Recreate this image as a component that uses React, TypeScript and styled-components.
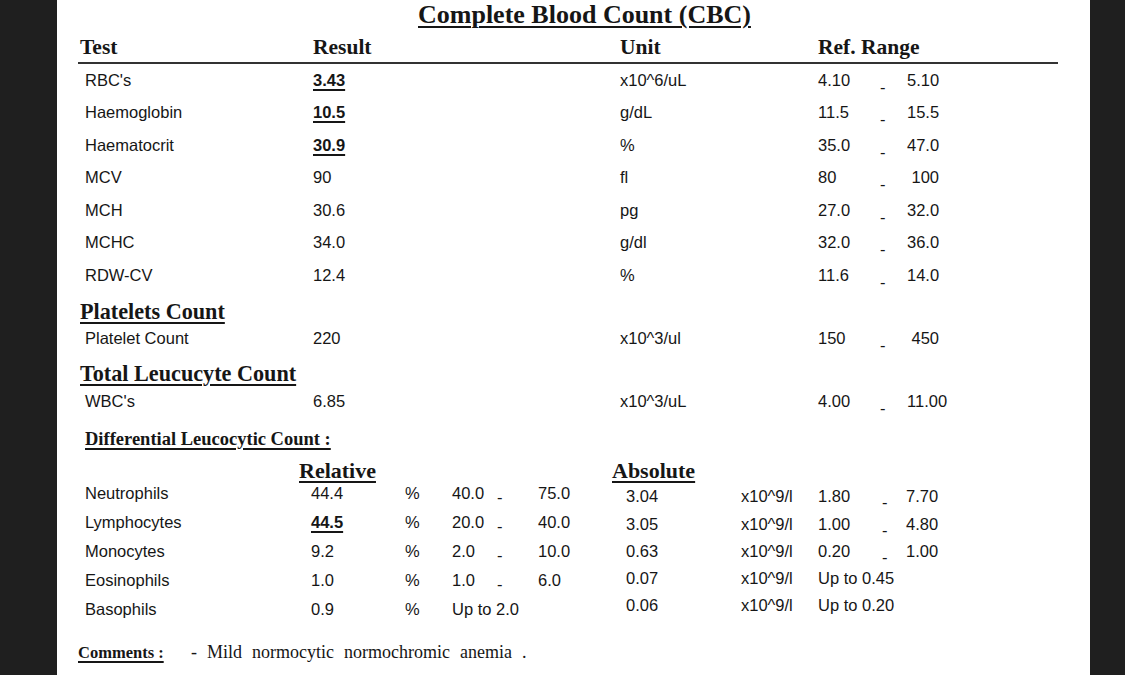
import React from 'react';
import styled, { createGlobalStyle } from 'styled-components';

const Global = createGlobalStyle`
  html, body { margin: 0; padding: 0; background: #1f1f1f; }
  body { width: 1125px; height: 675px; overflow: hidden; }
`;

const SERIF = `"Liberation Serif", "Times New Roman", serif`;
const SANS = `"Liberation Sans", Arial, sans-serif`;

const Viewport = styled.div`
  display: flex;
  width: 1125px;
  height: 675px;
  background: #1f1f1f;
`;

const Band = styled.div<{ $w: number }>`
  flex: 0 0 ${(p) => p.$w}px;
  background: #1f1f1f;
`;

const Paper = styled.main`
  flex: 1;
  background: #ffffff;
  padding: 0 32px 0 21px;
  overflow: hidden;
  color: #161616;
  font-family: ${SANS};
  font-size: 16.5px;
`;

const Title = styled.h1`
  margin: 0;
  padding-left: 340px;
  font: bold 26px/30px ${SERIF};
  text-decoration: underline;
  text-decoration-thickness: 2px;
  text-underline-offset: 3px;
  white-space: nowrap;
`;

const MAIN_COLS = '235px 307px 198px 62px 27px 1fr';

const HeaderRow = styled.div`
  display: grid;
  grid-template-columns: ${MAIN_COLS};
  margin-top: 4px;
  padding-bottom: 2px;
  border-bottom: 2px solid #333;
  font: bold 21.5px/26px ${SERIF};
`;

const HeadCell = styled.div<{ $pad?: number; $span?: number }>`
  padding-left: ${(p) => p.$pad ?? 0}px;
  grid-column: span ${(p) => p.$span ?? 1};
  white-space: nowrap;
`;

const Row = styled.div<{ $h: number }>`
  display: grid;
  grid-template-columns: ${MAIN_COLS};
  height: ${(p) => p.$h}px;
  align-items: center;
  white-space: nowrap;
`;

const NameCell = styled.div`
  padding-left: 7px;
`;

const Cell = styled.div``;

const Value = styled.div<{ $flag?: boolean }>`
  font-weight: ${(p) => (p.$flag ? 'bold' : 'normal')};
  text-decoration: ${(p) => (p.$flag ? 'underline' : 'none')};
  text-decoration-thickness: 2px;
  text-underline-offset: 3px;
`;

const Dash = styled.span<{ $drop: number }>`
  display: inline-block;
  transform: translateY(${(p) => p.$drop}px);
`;

const High = styled.div<{ $left?: boolean }>`
  width: 32px;
  text-align: ${(p) => (p.$left ? 'left' : 'right')};
`;

const SectionHeading = styled.h2<{ $top: number }>`
  margin: ${(p) => p.$top}px 0 0;
  padding-left: 2px;
  font: bold 22.2px/26px ${SERIF};
  text-decoration: underline;
  text-decoration-thickness: 2px;
  text-underline-offset: 3px;
`;

const SubHeading = styled.h3`
  margin: 11px 0 0;
  padding-left: 7px;
  font: bold 18.5px/22px ${SERIF};
  text-decoration: underline;
  text-decoration-thickness: 2px;
  text-underline-offset: 3px;
`;

const DiffBlock = styled.section`
  display: flex;
  margin-top: 10px;
`;

const DiffPart = styled.div<{ $w?: number; $gap: number }>`
  flex: ${(p) => (p.$w ? `0 0 ${p.$w}px` : '1')};
  display: flex;
  flex-direction: column;
  gap: ${(p) => p.$gap}px;
`;

const ColumnHead = styled.div<{ $pad: number; $below: number }>`
  height: 22px;
  padding-left: ${(p) => p.$pad}px;
  margin-bottom: ${(p) => p.$below}px;
  font: bold 22px/22px ${SERIF};
  text-decoration: underline;
  text-decoration-thickness: 2px;
  text-underline-offset: 3px;
`;

const DiffRow = styled.div<{ $cols: string }>`
  display: grid;
  grid-template-columns: ${(p) => p.$cols};
  height: 24px;
  align-items: center;
  white-space: nowrap;
`;

const SpanCell = styled.div`
  grid-column: span 3;
`;

const AbsCell = styled.div`
  padding-left: 14px;
`;

const Comments = styled.footer`
  display: flex;
  align-items: center;
  height: 24px;
  margin-top: 19px;
  font-family: ${SERIF};
`;

const CommentLabel = styled.div`
  flex: 0 0 113px;
  font: bold 16.5px/24px ${SERIF};
  text-decoration: underline;
  text-decoration-thickness: 1.5px;
  text-underline-offset: 3px;
`;

const CommentText = styled.div`
  font-size: 18px;
  word-spacing: 5.5px;
  white-space: nowrap;
`;

type CbcRow = { name: string; value: string; flag?: boolean; unit: string; low: string; high: string };

const cbc: CbcRow[] = [
  { name: "RBC's", value: '3.43', flag: true, unit: 'x10^6/uL', low: '4.10', high: '5.10' },
  { name: 'Haemoglobin', value: '10.5', flag: true, unit: 'g/dL', low: '11.5', high: '15.5' },
  { name: 'Haematocrit', value: '30.9', flag: true, unit: '%', low: '35.0', high: '47.0' },
  { name: 'MCV', value: '90', unit: 'fl', low: '80', high: '100' },
  { name: 'MCH', value: '30.6', unit: 'pg', low: '27.0', high: '32.0' },
  { name: 'MCHC', value: '34.0', unit: 'g/dl', low: '32.0', high: '36.0' },
  { name: 'RDW-CV', value: '12.4', unit: '%', low: '11.6', high: '14.0' },
];

type DiffData = {
  name: string;
  rel: string;
  flag?: boolean;
  low?: string;
  high?: string;
  upto?: string;
  abs: string;
  alow?: string;
  ahigh?: string;
  aupto?: string;
};

const diff: DiffData[] = [
  { name: 'Neutrophils', rel: '44.4', low: '40.0', high: '75.0', abs: '3.04', alow: '1.80', ahigh: '7.70' },
  { name: 'Lymphocytes', rel: '44.5', flag: true, low: '20.0', high: '40.0', abs: '3.05', alow: '1.00', ahigh: '4.80' },
  { name: 'Monocytes', rel: '9.2', low: '2.0', high: '10.0', abs: '0.63', alow: '0.20', ahigh: '1.00' },
  { name: 'Eosinophils', rel: '1.0', low: '1.0', high: '6.0', abs: '0.07', aupto: 'Up to 0.45' },
  { name: 'Basophils', rel: '0.9', upto: 'Up to 2.0', abs: '0.06', aupto: 'Up to 0.20' },
];

const LEFT_COLS = '233px 94px 47px 45px 41px 1fr';
const RIGHT_COLS = '129px 77px 64px 24px 1fr';

const MainRow: React.FC<CbcRow & { h: number; left?: boolean }> = ({ name, value, flag, unit, low, high, h, left }) => (
  <Row $h={h}>
    <NameCell>{name}</NameCell>
    <Value $flag={flag}>{value}</Value>
    <Cell>{unit}</Cell>
    <Cell>{low}</Cell>
    <Cell>
      <Dash $drop={7}>-</Dash>
    </Cell>
    <High $left={left}>{high}</High>
  </Row>
);

export default function App() {
  return (
    <>
      <Global />
      <Viewport>
        <Band $w={57} />
        <Paper>
          <Title>Complete Blood Count (CBC)</Title>
          <HeaderRow>
            <HeadCell $pad={2}>Test</HeadCell>
            <HeadCell>Result</HeadCell>
            <HeadCell>Unit</HeadCell>
            <HeadCell $span={3}>Ref. Range</HeadCell>
          </HeaderRow>
          {cbc.map((r) => (
            <MainRow key={r.name} {...r} h={32.5} />
          ))}

          <SectionHeading $top={7}>Platelets Count</SectionHeading>
          <MainRow name="Platelet Count" value="220" unit="x10^3/ul" low="150" high="450" h={28} />

          <SectionHeading $top={8}>Total Leucucyte Count</SectionHeading>
          <MainRow name="WBC's" value="6.85" unit="x10^3/uL" low="4.00" high="11.00" h={30} left />

          <SubHeading>Differential Leucocytic Count :</SubHeading>

          <DiffBlock>
            <DiffPart $w={534} $gap={5}>
              <ColumnHead $pad={221} $below={-5}>Relative</ColumnHead>
              {diff.map((d) => (
                <DiffRow key={d.name} $cols={LEFT_COLS}>
                  <NameCell>{d.name}</NameCell>
                  <Value $flag={d.flag}>{d.rel}</Value>
                  <Cell>%</Cell>
                  {d.upto ? (
                    <SpanCell>{d.upto}</SpanCell>
                  ) : (
                    <>
                      <Cell>{d.low}</Cell>
                      <Cell>
                        <Dash $drop={4}>-</Dash>
                      </Cell>
                      <Cell>{d.high}</Cell>
                    </>
                  )}
                </DiffRow>
              ))}
            </DiffPart>
            <DiffPart $gap={3.25}>
              <ColumnHead $pad={0} $below={0}>Absolute</ColumnHead>
              {diff.map((d) => (
                <DiffRow key={d.name} $cols={RIGHT_COLS}>
                  <AbsCell>{d.abs}</AbsCell>
                  <Cell>x10^9/l</Cell>
                  {d.aupto ? (
                    <SpanCell>{d.aupto}</SpanCell>
                  ) : (
                    <>
                      <Cell>{d.alow}</Cell>
                      <Cell>
                        <Dash $drop={6}>-</Dash>
                      </Cell>
                      <Cell>{d.ahigh}</Cell>
                    </>
                  )}
                </DiffRow>
              ))}
            </DiffPart>
          </DiffBlock>

          <Comments>
            <CommentLabel>Comments :</CommentLabel>
            <CommentText>- Mild normocytic normochromic anemia .</CommentText>
          </Comments>
        </Paper>
        <Band $w={35} />
      </Viewport>
    </>
  );
}
